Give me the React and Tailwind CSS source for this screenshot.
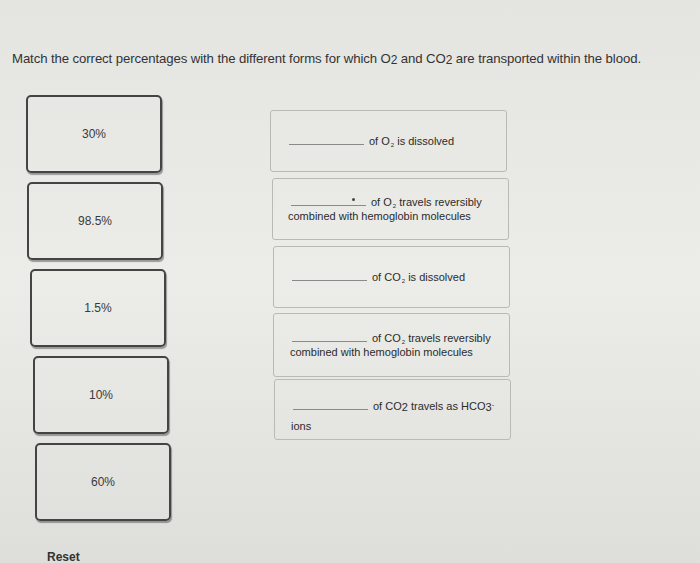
const choices = [
  { label: '30%', shift: 'ml-0' },
  { label: '98.5%', shift: 'ml-[1px]' },
  { label: '1.5%', shift: 'ml-[4px]' },
  { label: '10%', shift: 'ml-[7px]' },
  { label: '60%', shift: 'ml-[9px]' },
]

function Sub({ children, tiny }) {
  return (
    <sub className={tiny ? 'text-[6px] relative top-[2px] ml-[1px]' : 'text-[11px] relative top-[1px]'}>
      {children}
    </sub>
  )
}

function Blank({ dot }) {
  return (
    <span className="inline-block w-[75px] border-b border-[#8a8a8a] h-[12px] mr-[5px] relative align-baseline">
      {dot && <span className="absolute right-[11px] top-[4px] w-[3px] h-[3px] rounded-full bg-[#444]" />}
    </span>
  )
}

function Target({ shift, h, children, extra }) {
  return (
    <div
      className={`${shift} w-[237px] ${h} border border-[#b9b9b6] rounded-[3px] flex items-center pl-[18px] pr-2 text-[11px] text-[#2b2b2b] ${extra ?? ''}`}
    >
      <div>{children}</div>
    </div>
  )
}

export default function App() {
  return (
    <div
      className="w-[700px] h-[563px] overflow-hidden bg-gradient-to-b from-[#e4e4e1] via-[#ecece9] to-[#dededb] text-[#2a2a2a]"
      style={{ fontFamily: '"Liberation Sans", Arial, sans-serif' }}
    >
      {/* question */}
      <p className="pt-[49px] pl-[12px] text-[13.2px] tracking-[-0.1px] text-[#333]">
        Match the correct percentages with the different forms for which O<sub className="text-[12px] relative top-[1px]">2</sub> and CO<sub className="text-[12px] relative top-[1px]">2</sub> are transported within the blood.
      </p>

      <div className="flex mt-[26px]">
        {/* draggable answers */}
        <div className="pl-[26px] flex flex-col gap-[9px]">
          {choices.map((c) => (
            <div
              key={c.label}
              className={`${c.shift} w-[136px] h-[78px] border-2 border-[#444] rounded-[5px] shadow-[1px_2px_1px_rgba(0,0,0,0.35)] flex items-center justify-center text-[12px] text-[#3a3a3a]`}
            >
              {c.label}
            </div>
          ))}
          <button className="ml-[21px] mt-[20px] text-left text-[12px] leading-[14px] font-bold text-[#333]">Reset</button>
        </div>

        {/* drop targets */}
        <div className="ml-[106px] mt-[15px] flex flex-col gap-[6px]">
          <Target shift="-ml-[7px]" h="h-[62px]">
            <Blank />of O<Sub tiny>2</Sub> is dissolved
          </Target>
          <Target shift="-ml-[5px]" h="h-[62px]" extra="leading-[14px]">
            <Blank dot />of O<Sub tiny>2</Sub> travels reversibly<br />
            <span className="-ml-[3px]">combined with hemoglobin molecules</span>
          </Target>
          <Target shift="-ml-[4px]" h="h-[62px]">
            <Blank />of CO<Sub tiny>2</Sub> is dissolved
          </Target>
          <Target shift="-ml-[4px]" h="h-[64px]" extra="leading-[14px] -mt-[1px]">
            <Blank />of CO<Sub tiny>2</Sub> travels reversibly<br />
            <span className="-ml-[2px]">combined with hemoglobin molecules</span>
          </Target>
          <Target shift="-ml-[3px]" h="h-[61px]" extra="leading-[20px] pt-[14px] -mt-[4px]">
            <Blank />of CO<Sub>2</Sub> travels as HCO<Sub>3</Sub><sup className="text-[7px]">-</sup><br />
            <span className="-ml-[2px]">ions</span>
          </Target>
        </div>
      </div>
    </div>
  )
}
